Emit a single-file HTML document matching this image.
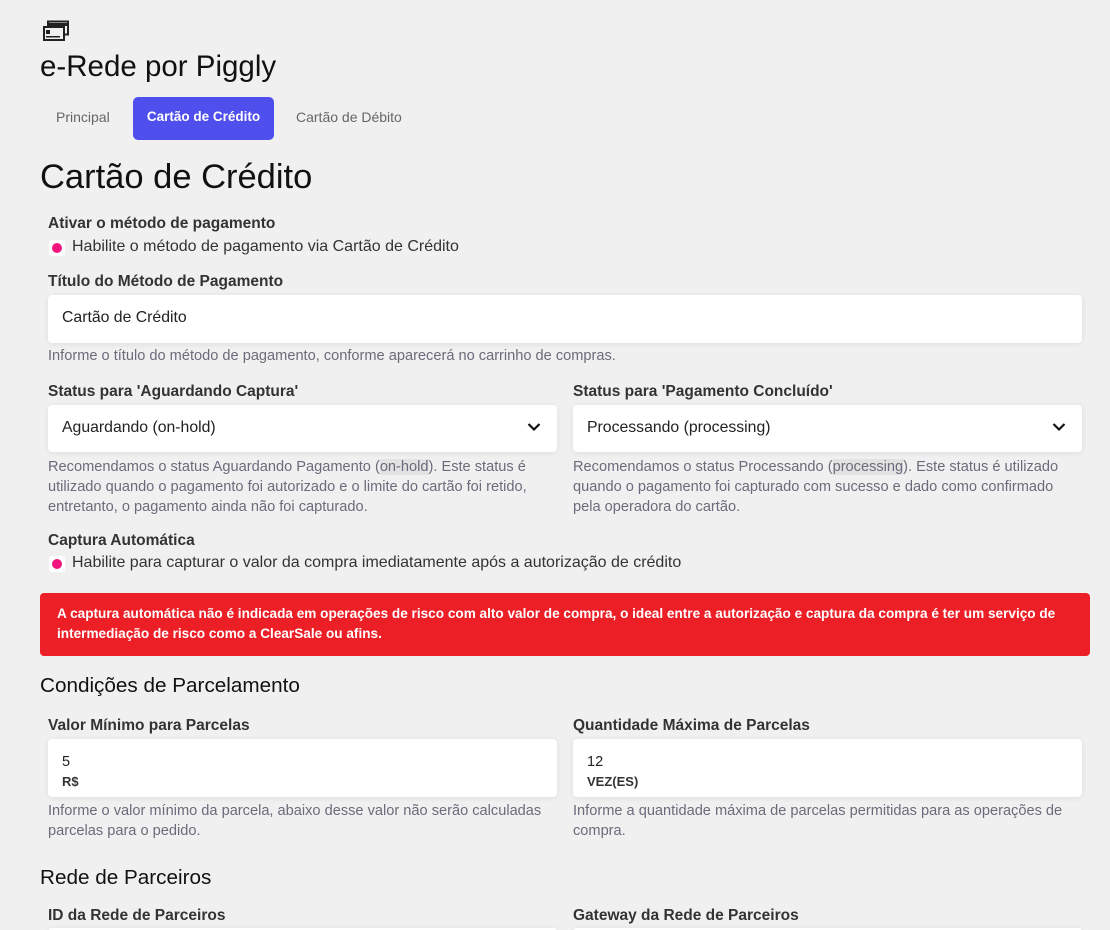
<!DOCTYPE html>
<html><head><meta charset="utf-8"><style>
*{margin:0;padding:0;box-sizing:border-box}
html,body{width:1110px;height:930px;overflow:hidden}
body{background:#f0f0f0;font-family:"Liberation Sans",sans-serif;position:relative;color:#222}
.a{position:absolute;white-space:nowrap}
.lbl{font-weight:bold;font-size:15.5px;color:#333}
.help{font-size:14.6px;color:#6b6b7b;line-height:20px;white-space:normal}
.box{position:absolute;background:#fff;border-radius:4px;box-shadow:0 1px 6px rgba(0,0,0,.08)}
.val{position:absolute;left:14px;font-size:15.8px;color:#222}
.chk{position:absolute;width:16px;height:16px;background:#fff;border-radius:3px}
.chk:after{content:"";position:absolute;left:3px;top:3px;width:10px;height:10px;border-radius:50%;background:#f2157d}
.chk-t{font-size:16px;color:#333}
code{background:#e2e2e2;font-family:inherit}
.h2{font-size:20.7px;color:#111}
</style></head><body>
<svg class="a" style="left:42px;top:20px" width="28" height="22" viewBox="0 0 28 22"><rect x="6" y="1.5" width="20" height="13" fill="#f0f0f0" stroke="#222" stroke-width="2"/><rect x="6" y="3" width="20" height="3" fill="#222"/><rect x="2" y="7" width="20" height="13" fill="#f0f0f0" stroke="#222" stroke-width="2"/><rect x="4" y="10" width="4" height="4" fill="#222"/><rect x="4" y="16" width="14" height="1.5" fill="#222"/></svg>
<div class="a" style="left:40px;top:50px;font-size:29.5px;color:#111">e-Rede por Piggly</div>
<div class="a" style="left:56px;top:109px;font-size:14px;color:#666">Principal</div>
<div class="a" style="left:133px;top:97px;width:141px;height:43px;background:#4f4fee;border-radius:5px;color:#fff;font-weight:bold;font-size:13.5px;text-align:center;line-height:40px">Cartão de Crédito</div>
<div class="a" style="left:296px;top:109px;font-size:14px;color:#666">Cartão de Débito</div>
<div class="a" style="left:40px;top:158px;font-size:34.5px;color:#111">Cartão de Crédito</div>
<div class="a lbl" style="left:48px;top:215px">Ativar o método de pagamento</div>
<div class="chk" style="left:49px;top:240px"></div>
<div class="a chk-t" style="left:72px;top:238px">Habilite o método de pagamento via Cartão de Crédito</div>
<div class="a lbl" style="left:48px;top:273px">Título do Método de Pagamento</div>
<div class="box" style="left:48px;top:295px;width:1034px;height:48px"><div class="val" style="top:14px">Cartão de Crédito</div></div>
<div class="a help" style="left:48px;top:346px">Informe o título do método de pagamento, conforme aparecerá no carrinho de compras.</div>
<div class="a lbl" style="left:48px;top:383px">Status para 'Aguardando Captura'</div>
<div class="box" style="left:48px;top:405px;width:509px;height:47px"><div class="val" style="top:14px">Aguardando (on-hold)</div><svg style="position:absolute;right:16px;top:17px" width="14" height="10"><path d="M1.5 2l5.5 5.5 5.5-5.5" stroke="#111" stroke-width="2.2" fill="none"/></svg></div>
<div class="a help" style="left:48px;top:457px;width:500px">Recomendamos o status Aguardando Pagamento (<code>on-hold</code>). Este status é utilizado quando o pagamento foi autorizado e o limite do cartão foi retido, entretanto, o pagamento ainda não foi capturado.</div>
<div class="a lbl" style="left:573px;top:383px">Status para 'Pagamento Concluído'</div>
<div class="box" style="left:573px;top:405px;width:509px;height:47px"><div class="val" style="top:14px">Processando (processing)</div><svg style="position:absolute;right:16px;top:17px" width="14" height="10"><path d="M1.5 2l5.5 5.5 5.5-5.5" stroke="#111" stroke-width="2.2" fill="none"/></svg></div>
<div class="a help" style="left:573px;top:457px;width:500px">Recomendamos o status Processando (<code>processing</code>). Este status é utilizado quando o pagamento foi capturado com sucesso e dado como confirmado pela operadora do cartão.</div>
<div class="a lbl" style="left:48px;top:532px">Captura Automática</div>
<div class="chk" style="left:49px;top:556px"></div>
<div class="a chk-t" style="left:72px;top:554px">Habilite para capturar o valor da compra imediatamente após a autorização de crédito</div>
<div class="a" style="left:40px;top:593px;width:1050px;height:63px;background:#ec1f27;border-radius:4px;color:#fff;font-weight:bold;font-size:13.6px;line-height:20px;padding:11px 17px;white-space:normal">A captura automática não é indicada em operações de risco com alto valor de compra, o ideal entre a autorização e captura da compra é ter um serviço de intermediação de risco como a ClearSale ou afins.</div>
<div class="a h2" style="left:40px;top:674px">Condições de Parcelamento</div>
<div class="a lbl" style="left:48px;top:717px">Valor Mínimo para Parcelas</div>
<div class="box" style="left:48px;top:739px;width:509px;height:58px"><div class="val" style="top:15px;font-size:14.5px">5</div><div class="val" style="top:35px;font-size:13px;font-weight:bold;color:#333">R$</div></div>
<div class="a help" style="left:48px;top:801px;width:500px">Informe o valor mínimo da parcela, abaixo desse valor não serão calculadas parcelas para o pedido.</div>
<div class="a lbl" style="left:573px;top:717px">Quantidade Máxima de Parcelas</div>
<div class="box" style="left:573px;top:739px;width:509px;height:58px"><div class="val" style="top:15px;font-size:14.5px">12</div><div class="val" style="top:35px;font-size:13px;font-weight:bold;color:#333">VEZ(ES)</div></div>
<div class="a help" style="left:573px;top:801px;width:500px">Informe a quantidade máxima de parcelas permitidas para as operações de compra.</div>
<div class="a h2" style="left:40px;top:866px">Rede de Parceiros</div>
<div class="a lbl" style="left:48px;top:907px">ID da Rede de Parceiros</div>
<div class="a lbl" style="left:573px;top:907px">Gateway da Rede de Parceiros</div>
<div class="box" style="left:48px;top:928px;width:509px;height:40px"></div>
<div class="box" style="left:573px;top:928px;width:509px;height:40px"></div>
</body></html>
